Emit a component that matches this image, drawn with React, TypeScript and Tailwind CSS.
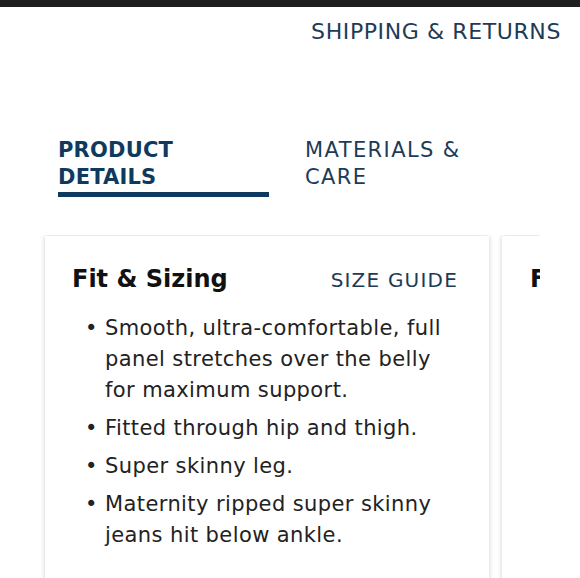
export default function App() {
  const bullets = [
    'Smooth, ultra-comfortable, full panel stretches over the belly for maximum support.',
    'Fitted through hip and thigh.',
    'Super skinny leg.',
    'Maternity ripped super skinny jeans hit below ankle.',
  ];

  return (
    <div className="w-[580px] h-[578px] overflow-hidden bg-white font-['DejaVu_Sans',sans-serif]">
      {/* Top bar */}
      <div className="h-[7px] bg-[#1f1f1f]" />

      {/* Shipping link */}
      <div className="flex justify-end pr-[19px] pt-[12px]">
        <span className="text-[22px] leading-[26px] tracking-[0.6px] text-[#1d3b57]">
          SHIPPING &amp; RETURNS
        </span>
      </div>

      {/* Tabs */}
      <div className="flex pl-[58px] pt-[92px]">
        <div className="w-[211px]">
          <div className="text-[21px] leading-[27px] font-bold tracking-[0.2px] text-[#0f3a60]">
            PRODUCT
            <br />
            DETAILS
          </div>
          <div className="mt-[1px] h-[5px] bg-[#0f3a60]" />
        </div>
        <div className="ml-[36px] text-[21px] leading-[27px] tracking-[1.4px] text-[#1d3b57]">
          MATERIALS &amp;
          <br />
          CARE
        </div>
      </div>

      {/* Cards */}
      <div className="mt-[38px] ml-[40px] w-[500px] overflow-hidden pl-[5px] pt-[1px]">
        <div className="flex gap-[13px] pb-4">
          <div className="w-[444px] shrink-0 bg-white shadow-[0_0_5px_rgba(0,0,0,0.2)] pl-[27px] pr-[31px] pt-[28px] pb-6">
            <div className="flex items-baseline justify-between">
              <h2 className="text-[24px] leading-[30px] font-bold text-[#111]">Fit &amp; Sizing</h2>
              <span className="text-[20px] tracking-[1.2px] text-[#1d3b57]">SIZE GUIDE</span>
            </div>
            <ul className="mt-[18px] flex flex-col gap-[7px]">
              {bullets.map((b) => (
                <li key={b} className="flex text-[21px] leading-[31px] tracking-[0.4px] text-[#222]">
                  <span className="w-[33px] shrink-0 pl-[13px]">•</span>
                  <span>{b}</span>
                </li>
              ))}
            </ul>
          </div>
          <div className="w-[444px] shrink-0 bg-white shadow-[0_0_5px_rgba(0,0,0,0.2)] pl-[28px] pt-[28px] h-[360px]">
            <h2 className="text-[24px] leading-[30px] font-bold text-[#111]">Fabric</h2>
          </div>
        </div>
      </div>
    </div>
  );
}
